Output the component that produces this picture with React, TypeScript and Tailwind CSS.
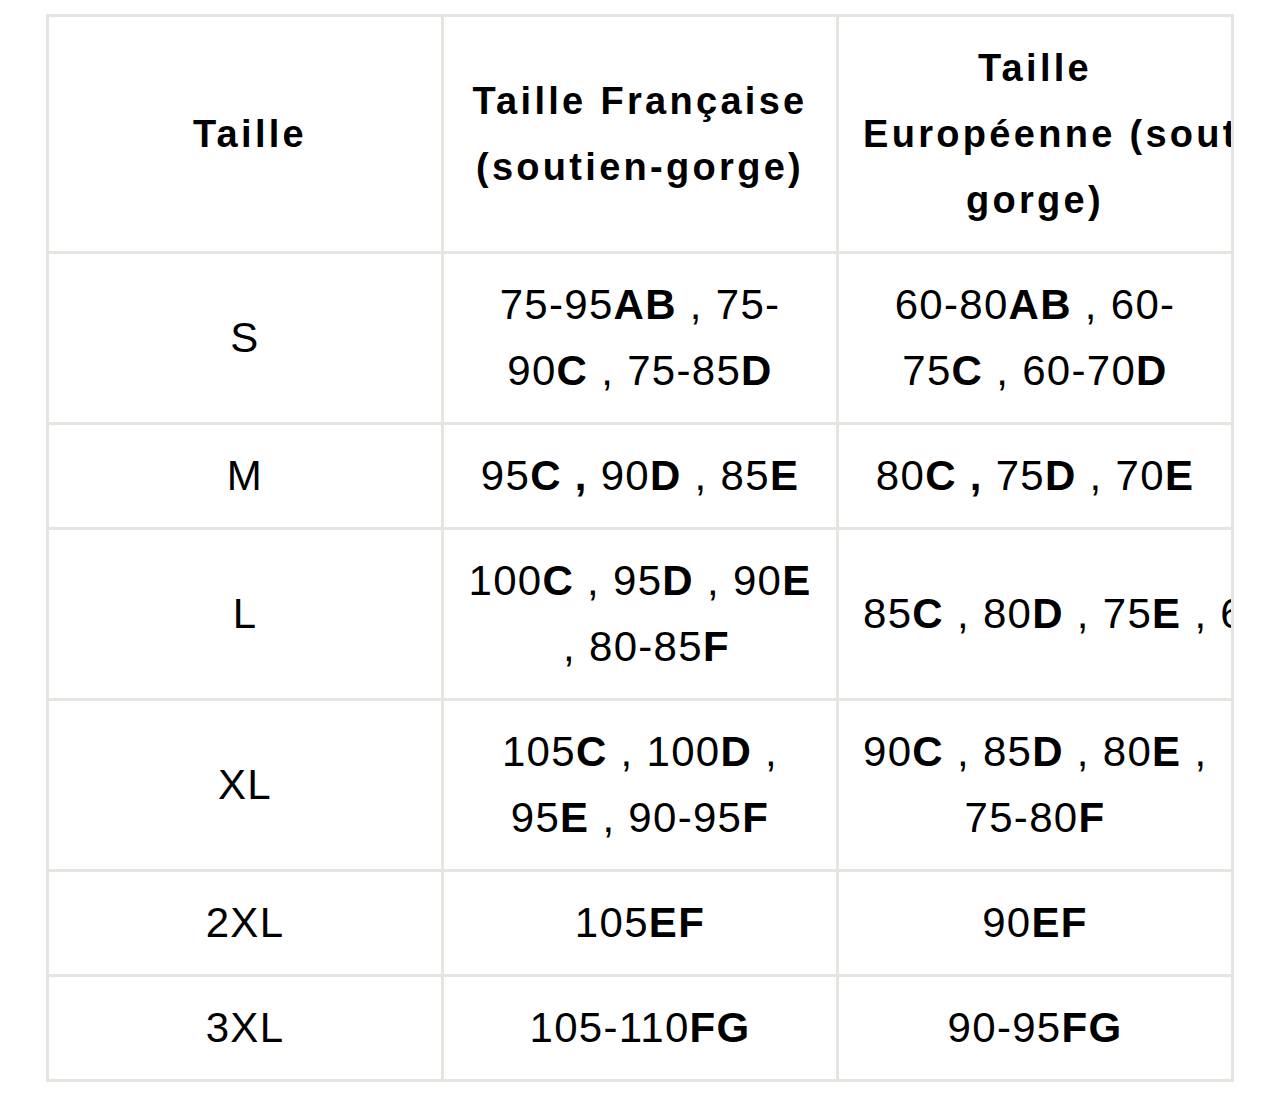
import React from 'react';

// Guide des tailles : taille / française / européenne
type Seg = { t: string; b?: boolean };
type Cell = Seg[][]; // lines of segments

const n = (t: string): Seg => ({ t });
const b = (t: string): Seg => ({ t, b: true });

const rows: { size: string; fr: Cell; eu: Cell }[] = [
  {
    size: 'S',
    fr: [[n('75-95'), b('AB'), n(' , 75-')], [n('90'), b('C'), n(' , 75-85'), b('D')]],
    eu: [[n('60-80'), b('AB'), n(' , 60-')], [n('75'), b('C'), n(' , 60-70'), b('D')]],
  },
  {
    size: 'M',
    fr: [[n('95'), b('C ,'), n(' 90'), b('D'), n(' , 85'), b('E')]],
    eu: [[n('80'), b('C ,'), n(' 75'), b('D'), n(' , 70'), b('E')]],
  },
  {
    size: 'L',
    fr: [[n('100'), b('C'), n(' , 95'), b('D'), n(' , 90'), b('E')], [n(' , 80-85'), b('F')]],
    eu: [[n('85'), b('C'), n(' , 80'), b('D'), n(' , 75'), b('E'), n(' , 65-70'), b('F')]],
  },
  {
    size: 'XL',
    fr: [[n('105'), b('C'), n(' , 100'), b('D'), n(' ,')], [n('95'), b('E'), n(' , 90-95'), b('F')]],
    eu: [[n('90'), b('C'), n(' , 85'), b('D'), n(' , 80'), b('E'), n(' ,')], [n('75-80'), b('F')]],
  },
  { size: '2XL', fr: [[n('105'), b('EF')]], eu: [[n('90'), b('EF')]] },
  { size: '3XL', fr: [[n('105-110'), b('FG')]], eu: [[n('90-95'), b('FG')]] },
];

const Lines: React.FC<{ lines: Cell }> = ({ lines }) => (
  <div className="w-full text-center whitespace-pre">
    {lines.map((line, i) => (
      <div key={i}>
        {line.map((s, j) => (
          <span key={j} className={s.b ? 'font-bold' : ''}>
            {s.t}
          </span>
        ))}
      </div>
    ))}
  </div>
);

const cellCls =
  'flex items-center overflow-hidden border-r-[3px] border-b-[3px] border-[#e6e6e1] px-[24px] py-[18px]';
const headCls = `${cellCls} text-[38px] font-bold tracking-[3.3px]`;
const bodyCls = `${cellCls} text-[42px] tracking-[1.3px]`;

export default function App() {
  return (
    <div className="min-h-screen bg-white pt-[14px] pl-[46px] font-['Liberation_Sans',Arial,sans-serif] text-black">
      <div className="grid w-[1188px] grid-cols-[395px_395px_395px] border-l-[3px] border-t-[3px] border-[#e6e6e1] leading-[66px]">
        {/* en-tête */}
        <div className={headCls}>
          <div className="w-full text-center pl-[10px]">Taille</div>
        </div>
        <div className={headCls}>
          <div className="w-full text-center">
            Taille Française
            <br />
            (soutien-gorge)
          </div>
        </div>
        <div className={headCls}>
          <div className="w-full text-center whitespace-pre">
            {'Taille'}
            <br />
            {'Européenne (soutien-'}
            <br />
            {'gorge)'}
          </div>
        </div>

        {rows.map((r) => (
          <React.Fragment key={r.size}>
            <div className={bodyCls}>
              <div className="w-full text-center">{r.size}</div>
            </div>
            <div className={bodyCls}>
              <Lines lines={r.fr} />
            </div>
            <div className={bodyCls}>
              <Lines lines={r.eu} />
            </div>
          </React.Fragment>
        ))}
      </div>
    </div>
  );
}
